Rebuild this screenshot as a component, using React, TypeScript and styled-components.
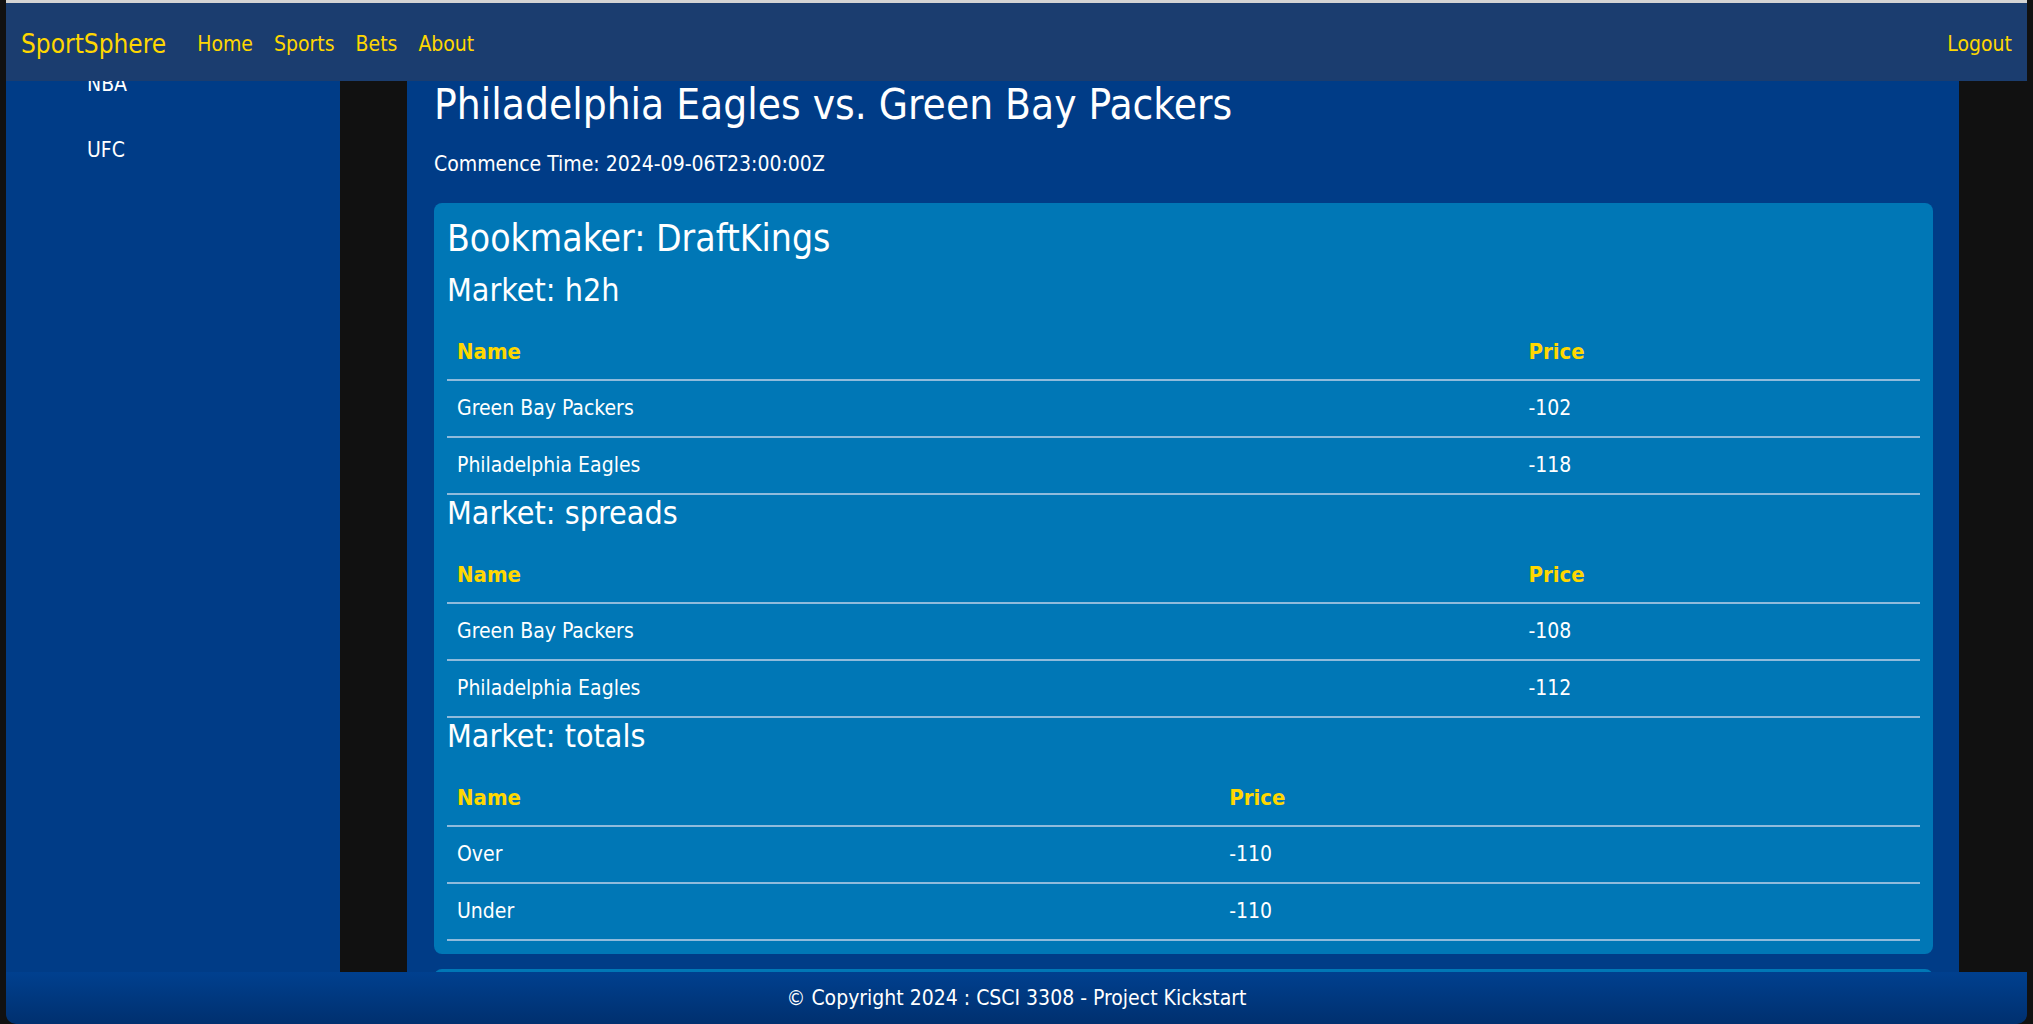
import React, { useLayoutEffect, useRef } from "react";
import styled, { createGlobalStyle } from "styled-components";

const GlobalStyle = createGlobalStyle`
  html, body { margin: 0; padding: 0; height: 100%; background: #111111; }
  body {
    font-family: "DejaVu Sans Condensed", "DejaVu Sans", sans-serif;
    font-stretch: condensed;
    color: #ffffff;
  }
  #root { height: 100%; }
`;

const Page = styled.div`
  height: 100vh;
  box-sizing: border-box;
  margin: 0 6px;
  border-top: 3px solid #d4d4d4;
  display: flex;
  flex-direction: column;
  overflow: hidden;
`;

const TopBar = styled.header`
  flex: 0 0 78px;
  box-sizing: border-box;
  display: flex;
  align-items: center;
  padding: 3px 15px 0;
  background: #1b3d6f;
`;

const Brand = styled.a`
  font-size: 26px;
  color: #ffd700;
  text-decoration: none;
`;

const NavList = styled.nav`
  display: flex;
  gap: 21px;
  margin-left: 31px;
`;

const NavLink = styled.a<{ $right?: boolean }>`
  font-size: 21px;
  color: #ffd700;
  text-decoration: none;
  margin-left: ${(p) => (p.$right ? "auto" : "0")};
`;

const Scroller = styled.div`
  flex: 1 1 auto;
  min-height: 0;
  overflow-y: scroll;
  scrollbar-width: none;
  &::-webkit-scrollbar { display: none; }
`;

const Columns = styled.div`
  display: flex;
  align-items: stretch;
  min-height: 100%;
`;

const Sidebar = styled.aside`
  flex: 0 0 334px;
  background: #003c87;
  padding-top: 39px;
`;

const SideItem = styled.a`
  display: block;
  padding: 21px 0 21px 81px;
  line-height: 24px;
  font-size: 21px;
  color: #ffffff;
  text-decoration: none;
`;

const Main = styled.main`
  flex: 1 1 auto;
  margin: 0 68px 0 67px;
  background: #003c87;
  padding: 200px 26px 40px 27px;
`;

const Title = styled.h1`
  margin: 0;
  font-size: 42px;
  line-height: 50px;
  font-weight: normal;
`;

const Commence = styled.p`
  margin: 22px 0 27px;
  font-size: 21px;
  line-height: 24px;
`;

const Card = styled.section`
  background: #0077b6;
  border-radius: 8px;
  padding: 14px 13px 13px 13px;
  & + & { margin-top: 15px; }
`;

const Bookmaker = styled.h2`
  margin: 0 0 12px;
  font-size: 37px;
  line-height: 43px;
  font-weight: normal;
`;

const MarketTitle = styled.h3`
  margin: 0 0 15px;
  font-size: 32px;
  line-height: 37px;
  font-weight: normal;
`;

const OddsTable = styled.table`
  width: 100%;
  border-collapse: collapse;
  font-size: 21px;
`;

const HeadCell = styled.th`
  text-align: left;
  color: #ffd700;
  font-weight: bold;
  font-size: 22px;
  padding: 15px 10px;
  line-height: 25px;
  border-bottom: 2px solid #8fbbdc;
`;

const Cell = styled.td`
  padding: 15px 10px;
  line-height: 25px;
  border-bottom: 2px solid #8fbbdc;
`;

const Footer = styled.footer`
  flex: 0 0 52px;
  display: flex;
  align-items: center;
  justify-content: center;
  font-size: 21px;
  background: linear-gradient(180deg, #00408f 0%, #00306f 100%);
  border-radius: 0 0 10px 10px;
`;

type Outcome = { name: string; price: string };
type Market = { key: string; outcomes: Outcome[] };

const markets: Market[] = [
  {
    key: "h2h",
    outcomes: [
      { name: "Green Bay Packers", price: "-102" },
      { name: "Philadelphia Eagles", price: "-118" },
    ],
  },
  {
    key: "spreads",
    outcomes: [
      { name: "Green Bay Packers", price: "-108" },
      { name: "Philadelphia Eagles", price: "-112" },
    ],
  },
  {
    key: "totals",
    outcomes: [
      { name: "Over", price: "-110" },
      { name: "Under", price: "-110" },
    ],
  },
];

const MarketBlock: React.FC<{ market: Market }> = ({ market }) => (
  <>
    <MarketTitle>Market: {market.key}</MarketTitle>
    <OddsTable>
      <thead>
        <tr>
          <HeadCell>Name</HeadCell>
          <HeadCell>Price</HeadCell>
        </tr>
      </thead>
      <tbody>
        {market.outcomes.map((o) => (
          <tr key={o.name}>
            <Cell>{o.name}</Cell>
            <Cell>{o.price}</Cell>
          </tr>
        ))}
      </tbody>
    </OddsTable>
  </>
);

export default function App() {
  const scrollRef = useRef<HTMLDivElement>(null);
  useLayoutEffect(() => {
    if (scrollRef.current) scrollRef.current.scrollTop = 201;
  }, []);

  return (
    <>
      <GlobalStyle />
      <Page>
        <TopBar>
          <Brand href="#">SportSphere</Brand>
          <NavList>
            <NavLink href="#">Home</NavLink>
            <NavLink href="#">Sports</NavLink>
            <NavLink href="#">Bets</NavLink>
            <NavLink href="#">About</NavLink>
          </NavList>
          <NavLink href="#" $right>
            Logout
          </NavLink>
        </TopBar>
        <Scroller ref={scrollRef}>
          <Columns>
            <Sidebar>
              <SideItem href="#">NFL</SideItem>
              <SideItem href="#">MLB</SideItem>
              <SideItem href="#">NBA</SideItem>
              <SideItem href="#">UFC</SideItem>
            </Sidebar>
            <Main>
              <Title>Philadelphia Eagles vs. Green Bay Packers</Title>
              <Commence>Commence Time: 2024-09-06T23:00:00Z</Commence>
              <Card>
                <Bookmaker>Bookmaker: DraftKings</Bookmaker>
                {markets.map((m) => (
                  <MarketBlock key={m.key} market={m} />
                ))}
              </Card>
              <Card>
                <Bookmaker>Bookmaker: FanDuel</Bookmaker>
                {markets.map((m) => (
                  <MarketBlock key={m.key} market={m} />
                ))}
              </Card>
            </Main>
          </Columns>
        </Scroller>
        <Footer>© Copyright 2024 : CSCI 3308 - Project Kickstart</Footer>
      </Page>
    </>
  );
}
